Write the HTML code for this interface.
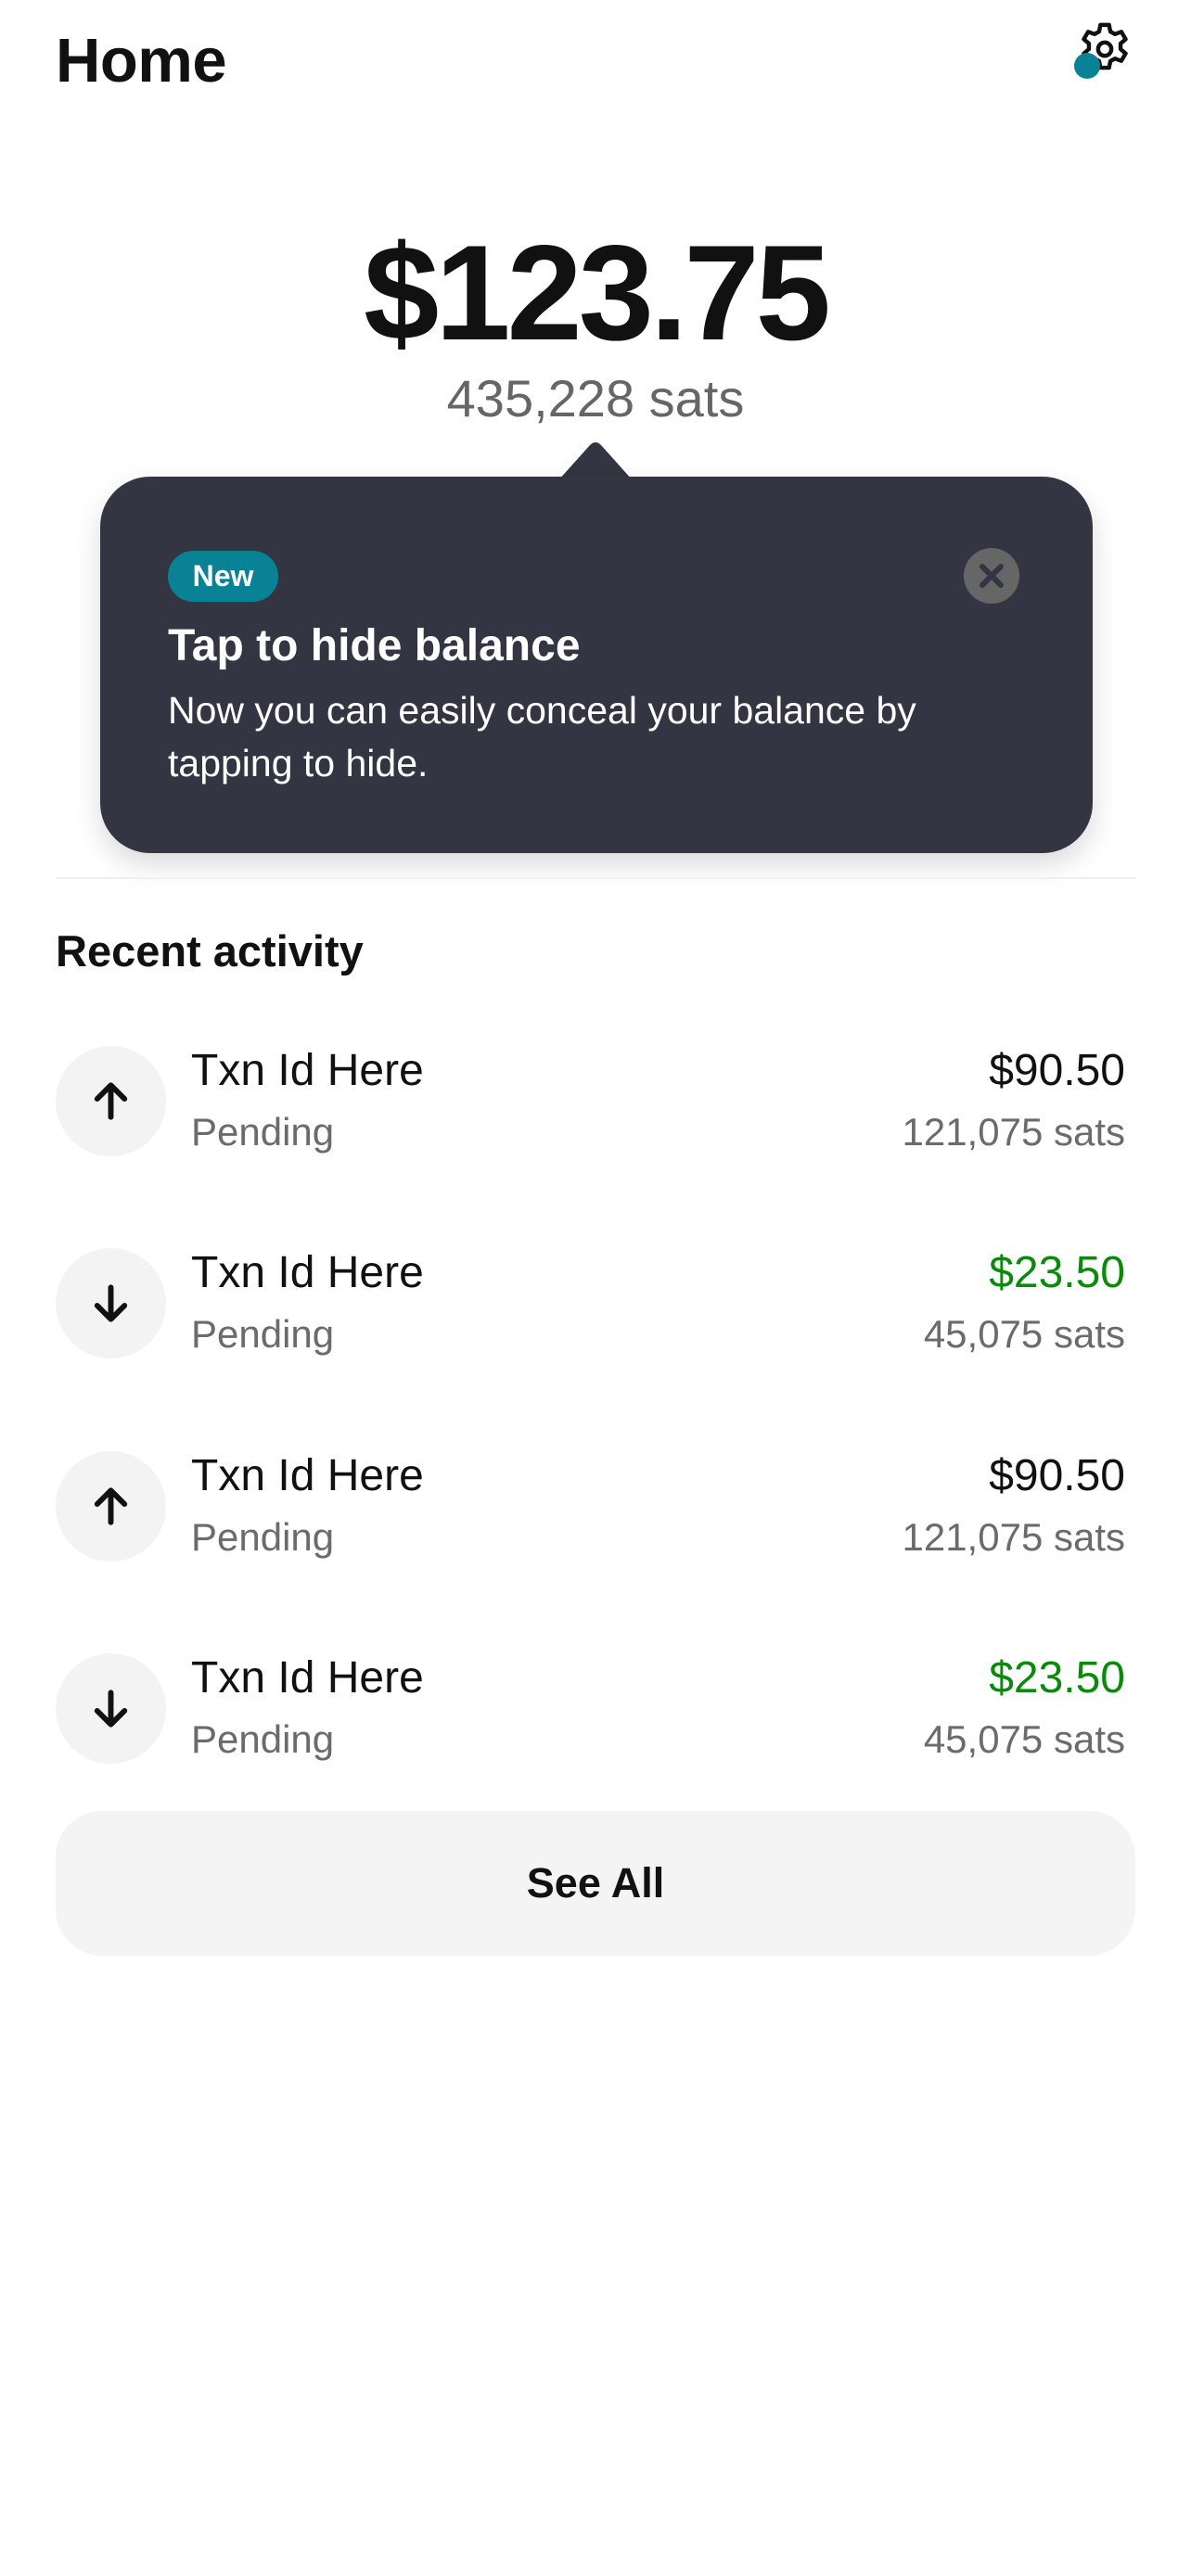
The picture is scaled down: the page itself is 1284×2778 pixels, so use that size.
<!DOCTYPE html>
<html><head><meta charset="utf-8"><style>
*{margin:0;padding:0;box-sizing:border-box}
body{width:1284px;height:2778px;background:#fff;font-family:"Liberation Sans",sans-serif;color:#111;position:relative;overflow:hidden}
.a{position:absolute;white-space:nowrap}
.row .c{position:absolute;left:60px;width:119px;height:119px;border-radius:50%;background:#f3f3f3}
.row .c svg{position:absolute;left:30px;top:30px}
.t{font-size:48px;left:206px}
.p{font-size:42px;color:#6b6b6b;left:206px}
.r{right:71px;text-align:right}
</style></head><body>
<div class="a" style="left:60px;top:27px;font-size:67px;font-weight:bold;letter-spacing:-0.5px">Home</div>
<svg class="a" style="left:1158px;top:20px" width="66" height="66" viewBox="0 0 24 24" fill="none" stroke="#111" stroke-width="1.6" stroke-linejoin="round"><path d="M10.3 2.5h3.4l.5 2.6 1.8 1 2.5-.9 1.7 2.9-2 1.7v2.2l2 1.7-1.7 2.9-2.5-.9-1.8 1-.5 2.6h-3.4l-.5-2.6-1.8-1-2.5.9-1.7-2.9 2-1.7v-2.2l-2-1.7 1.7-2.9 2.5.9 1.8-1z"/><circle cx="12" cy="12" r="2.6"/></svg>
<div class="a" style="left:1158px;top:57px;width:28px;height:28px;border-radius:50%;background:#0a8296"></div>
<div class="a" style="left:0;width:1284px;text-align:center;top:232px;font-size:146px;font-weight:bold;letter-spacing:-4px">$123.75</div>
<div class="a" style="left:0;width:1284px;text-align:center;top:397px;font-size:56px;color:#666">435,228 sats</div>
<svg class="a" style="left:602px;top:476px" width="80" height="42" viewBox="0 0 80 42"><path d="M0 42 L34 4 Q40 -2 46 4 L80 42Z" fill="#333542"/></svg>
<div class="a" style="left:108px;top:514px;width:1070px;height:406px;border-radius:54px;background:#333542;box-shadow:0 12px 30px rgba(0,0,0,.15)"></div>
<div class="a" style="left:181px;top:594px;width:119px;height:55px;border-radius:28px;background:#0a8296;color:#fff;font-size:32px;font-weight:bold;text-align:center;line-height:55px">New</div>
<svg class="a" style="left:1039px;top:591px" width="60" height="60" viewBox="0 0 60 60"><circle cx="30" cy="30" r="30" fill="#666"/><path d="M20 20L40 40M40 20L20 40" stroke="#333542" stroke-width="6" stroke-linecap="round"/></svg>
<div class="a" style="left:181px;top:669px;font-size:48px;font-weight:bold;color:#fff">Tap to hide balance</div>
<div class="a" style="left:181px;top:738px;font-size:41px;line-height:57px;color:#fff">Now you can easily conceal your balance by<br>tapping to hide.</div>
<div class="a" style="left:60px;top:946px;width:1164px;height:2px;background:#f0f0f0"></div>
<div class="a" style="left:60px;top:998px;font-size:47px;font-weight:bold">Recent activity</div>

<div class="row">
<div class="c" style="top:1128px"><svg width="59" height="59" viewBox="0 0 24 24" fill="none" stroke="#111" stroke-width="2.4" stroke-linecap="round" stroke-linejoin="round"><path d="M12 19V5M6 11l6-6 6 6"/></svg></div>
<div class="a t" style="top:1127px">Txn Id Here</div><div class="a p" style="top:1197px">Pending</div>
<div class="a t r" style="top:1127px;left:auto">$90.50</div><div class="a p r" style="top:1197px;left:auto">121,075 sats</div>

<div class="c" style="top:1346px"><svg width="59" height="59" viewBox="0 0 24 24" fill="none" stroke="#111" stroke-width="2.4" stroke-linecap="round" stroke-linejoin="round"><path d="M12 5v14M6 13l6 6 6-6"/></svg></div>
<div class="a t" style="top:1345px">Txn Id Here</div><div class="a p" style="top:1415px">Pending</div>
<div class="a t r" style="top:1345px;left:auto;color:#0a8a0a">$23.50</div><div class="a p r" style="top:1415px;left:auto">45,075 sats</div>

<div class="c" style="top:1565px"><svg width="59" height="59" viewBox="0 0 24 24" fill="none" stroke="#111" stroke-width="2.4" stroke-linecap="round" stroke-linejoin="round"><path d="M12 19V5M6 11l6-6 6 6"/></svg></div>
<div class="a t" style="top:1564px">Txn Id Here</div><div class="a p" style="top:1634px">Pending</div>
<div class="a t r" style="top:1564px;left:auto">$90.50</div><div class="a p r" style="top:1634px;left:auto">121,075 sats</div>

<div class="c" style="top:1783px"><svg width="59" height="59" viewBox="0 0 24 24" fill="none" stroke="#111" stroke-width="2.4" stroke-linecap="round" stroke-linejoin="round"><path d="M12 5v14M6 13l6 6 6-6"/></svg></div>
<div class="a t" style="top:1782px">Txn Id Here</div><div class="a p" style="top:1852px">Pending</div>
<div class="a t r" style="top:1782px;left:auto;color:#0a8a0a">$23.50</div><div class="a p r" style="top:1852px;left:auto">45,075 sats</div>
</div>

<div class="a" style="left:60px;top:1953px;width:1164px;height:156px;border-radius:50px;background:#f4f4f4;text-align:center;line-height:156px;font-size:45px;font-weight:bold">See All</div>
</body></html>
